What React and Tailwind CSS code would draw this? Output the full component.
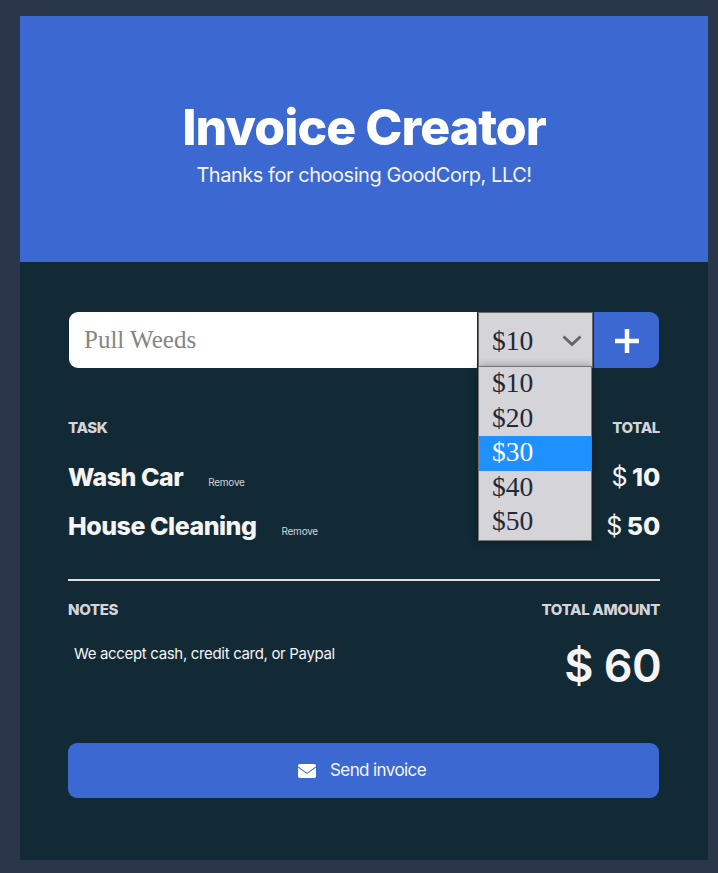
import React from "react";

const tasks = [
  { name: "Wash Car", price: 10 },
  { name: "House Cleaning", price: 50 },
];

const prices = [10, 20, 30, 40, 50];

function Header() {
  return (
    <header className="flex h-[246px] flex-col items-center bg-[#3c69d1] pt-[81px]">
      <h1 className="text-[50px] leading-[60px] font-extrabold tracking-[-0.97px] whitespace-nowrap text-white">
        Invoice Creator
      </h1>
      <p className="mt-[6px] text-[20px] leading-[24px] tracking-[-0.46px] whitespace-nowrap text-[#f5f5f5]">
        Thanks for choosing GoodCorp, LLC!
      </p>
    </header>
  );
}

function PriceSelect() {
  return (
    <div className="relative mr-px h-14 w-[115px] font-['Liberation_Serif',serif] text-[27.5px] text-[#1f2937]">
      <div className="flex h-full items-center justify-between border border-[#6b6b6b] bg-[#d5d4d9] pt-[2px] pr-[10px] pl-[13px]">
        <span>$10</span>
        <svg width="20" height="12" viewBox="0 0 20 12" fill="none" stroke="#666" strokeWidth="3">
          <path d="M1.5 1.5 10 9.5l8.5-8" />
        </svg>
      </div>
      <ul className="absolute top-[54px] left-0 h-[175px] w-[114px] border border-[#767676] bg-[#d5d4d9] shadow-[0_0_8px_rgba(0,0,0,0.35)]">
        {prices.map((price) => (
          <li
            key={price}
            className={
              price === 30
                ? "h-[34.6px] bg-[#1e90ff] pl-[13px] leading-[31px] text-white"
                : "h-[34.6px] pl-[13px] leading-[31px]"
            }
          >
            ${price}
          </li>
        ))}
      </ul>
    </div>
  );
}

function TaskForm() {
  return (
    <div className="ml-px flex h-14 w-[590px]">
      <input
        className="mr-px w-[408px] rounded-l-[9px] bg-white pl-[15px] font-['Liberation_Serif',serif] text-[25px] outline-none placeholder:text-[#858585]"
        placeholder="Pull Weeds"
      />
      <PriceSelect />
      <button className="flex flex-1 items-center justify-center rounded-r-[9px] bg-[#3c69d1] pt-[2px]" aria-label="Add">
        <svg width="24" height="24" viewBox="0 0 24 24" stroke="#fff" strokeWidth="4.5">
          <path d="M12 0v24M0 12h24" />
        </svg>
      </button>
    </div>
  );
}

function TaskRow({ name, price }) {
  return (
    <div className="flex h-[49px] items-center justify-between text-[#f5f5f5]">
      <div className="flex items-baseline">
        <span className="text-[25px] leading-[30px] font-extrabold tracking-[-0.49px]">{name}</span>
        <button className="ml-[25px] text-[10px] tracking-[-0.25px] text-[#d5d4d9]">Remove</button>
      </div>
      <div className="flex gap-[5px] text-[25px] leading-[30px] tracking-[-0.5px]">
        <span>$</span>
        <span className="font-extrabold tracking-[-0.2px]">{price}</span>
      </div>
    </div>
  );
}

export default function App() {
  return (
    <div className="h-[873px] w-[718px] bg-[#2a364a] pt-4 pl-5 font-['Inter',sans-serif]">
      <main className="h-[844px] w-[688px] bg-[#122936]">
        <Header />
        <section className="ml-12 w-[592px] pt-[50px]">
          <TaskForm />
          <div className="mt-[51px] flex justify-between text-[15px] leading-[18px] font-extrabold tracking-[-0.35px] text-[#d5d4d9]">
            <span>TASK</span>
            <span>TOTAL</span>
          </div>
          <div className="mt-[15px] h-[129px] border-b-2 border-[#e0e0e0]">
            {tasks.map((task) => (
              <TaskRow key={task.name} {...task} />
            ))}
          </div>
          <div className="mt-[20px] flex justify-between text-[15px] leading-[18px] font-extrabold tracking-[-0.35px] text-[#d5d4d9]">
            <span>NOTES</span>
            <span>TOTAL AMOUNT</span>
          </div>
          <div className="flex h-[124px] justify-between">
            <p className="mt-[26px] ml-[6px] text-[15px] leading-[18px] tracking-[-0.33px] text-[#f5f5f5]">
              We accept cash, credit card, or Paypal
            </p>
            <p className="mt-[19px] -mr-px text-[45px] leading-[56px] font-semibold tracking-[-0.6px] text-[#f5f5f5]">$ 60</p>
          </div>
          <button className="flex h-[55px] w-[591px] items-center justify-center gap-[14px] rounded-[9px] bg-[#3c69d1] pr-[3px] text-[17px] tracking-[-0.6px] text-[#f5f5f5]">
            <svg width="18" height="14" viewBox="0 0 18 14" fill="#fff">
              <path d="M1.8 0h14.4Q18 0 18 1.8v.4L9.8 8.2q-.8.6-1.6 0L0 2.2v-.4Q0 0 1.8 0ZM0 3.5l7.6 5.6q1.4 1 2.8 0L18 3.5v8.8q0 1.7-1.8 1.7H1.8Q0 14 0 12.300Z" />
            </svg>
            <span className="pt-px">Send invoice</span>
          </button>
        </section>
      </main>
    </div>
  );
}
